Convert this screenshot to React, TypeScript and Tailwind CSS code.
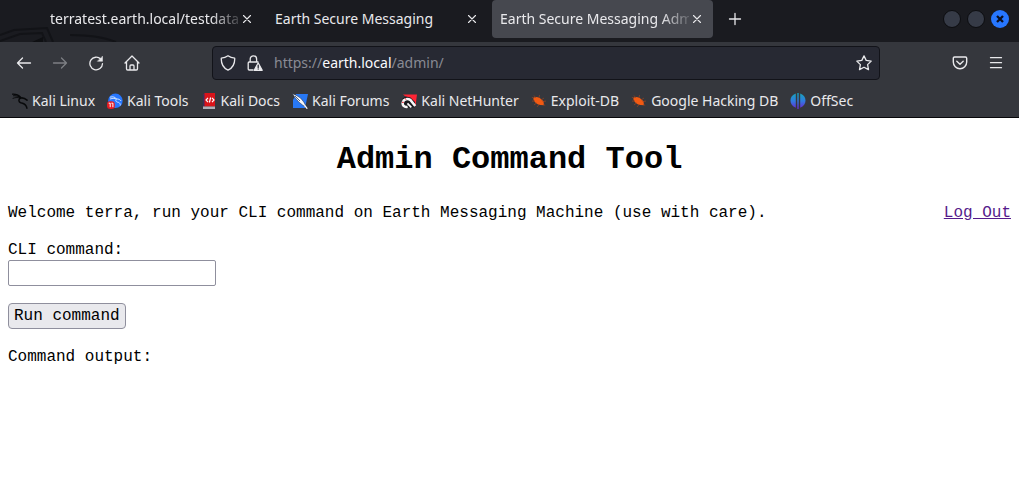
import React from "react";

type IconProps = { children: React.ReactNode; className?: string };

function Icon({ children, className = "size-4" }: IconProps) {
  return (
    <svg
      viewBox="0 0 16 16"
      className={`shrink-0 ${className}`}
      fill="none"
      stroke="currentColor"
      strokeWidth="1.3"
      strokeLinecap="round"
      strokeLinejoin="round"
      aria-hidden="true"
    >
      {children}
    </svg>
  );
}

function KaliIcon() {
  return (
    <svg viewBox="0 0 16 16" className="size-4 shrink-0" fill="none" stroke="#08090b" strokeLinecap="round" aria-hidden="true">
      <path d="M.5 1.2C3.5 1 6.5 2 8.6 4.2" strokeWidth="1.3" />
      <path d="M1.5 2.8C4.5 2.5 7 3.3 8.6 4.6" strokeWidth="1.1" />
      <path d="M1 5.3C3.6 4.2 6.4 4.4 8.4 5" strokeWidth=".9" />
      <path d="M8 5.2C10.5 4.4 12.6 5 15 7.2" strokeWidth="1.6" />
      <path d="M8.2 5.2C6.4 6.6 6.4 9 8.8 9.8 11.3 10.5 14.2 10.6 14.9 15.2" strokeWidth="1.5" />
    </svg>
  );
}

function ToolsIcon() {
  return (
    <svg viewBox="0 0 16 16" className="size-4 shrink-0" aria-hidden="true">
      <circle cx="8.4" cy="7.8" r="7.3" fill="#2777ff" />
      <path d="M2.8 4.2C6 3.2 8.5 4.2 9.5 6 11.6 5.8 13 6.6 14.2 8M3 6C6 5 8 5.5 9.5 6 8 7.5 9 9 11.5 9.4 13 10 13.5 11 13.2 12.5" fill="none" stroke="#dceaff" strokeWidth=".9" />
      <rect x="0" y="8.2" width="7.8" height="7.8" rx="3" fill="#e51b23" />
      <path d="M1.7 10.2h1.5v4M4.4 10.2h1.5v4" fill="none" stroke="#fff" strokeWidth="1" />
    </svg>
  );
}

function DocsIcon() {
  return (
    <svg viewBox="0 0 16 16" className="size-4 shrink-0" aria-hidden="true">
      <path d="M2 1.5 4 0h10v13.5H2z" fill="#d9141a" />
      <path d="M2 1.5 3.5.5v13H2z" fill="#3c2c5c" />
      <path d="M2 13.5h12V16H2z" fill="#aeb0b8" />
      <path d="m7 4.8-2 2.2 2 2.2m4-4.4 2 2.2-2 2.2M9.6 4.5 8.4 9.5" fill="none" stroke="#fff" strokeWidth="1.2" />
    </svg>
  );
}

function ForumsIcon() {
  return (
    <svg viewBox="0 0 16 16" className="size-4 shrink-0" aria-hidden="true">
      <path d="M4 1h12l-3 14H1V7z" fill="#2878f5" />
      <path d="M.3.5 4 2.2 8.5 5l3.3 4 3 5.5-4-2.3-4-3.2-3.8-4.5z" fill="#f6f7fa" stroke="#16223b" strokeWidth=".5" />
      <path d="m3 3 5 5" stroke="#253d65" strokeWidth=".8" />
      <path d="M12.5 12.5 15.3 15.7" stroke="#fff" strokeWidth="1.2" />
    </svg>
  );
}

function NetHunterIcon() {
  return (
    <svg viewBox="0 0 16 16" className="size-4 shrink-0" aria-hidden="true">
      <path d="M2 1.5h14l-1.5 11.5-4-5z" fill="#ff2434" />
      <path d="M1.5 5.5 5 3.5l4.5 1L14 9l-.5 5.5h-11z" fill="#16181d" />
      <path d="M6.6 13.8C3 14.5 1.2 12 1.8 9.5 2.5 6.2 6.5 5 9.2 6.8L14.2 13" fill="none" stroke="#f7f7f8" strokeWidth="2.6" />
      <path d="M6.4 10.4 10.3 14.4" stroke="#f7f7f8" strokeWidth="1.8" />
      <path d="M1 9.3h1.8M4.2 5.2l.8 1.5" stroke="#e61e2d" strokeWidth="1" />
    </svg>
  );
}

function BugIcon() {
  return (
    <svg viewBox="0 0 16 16" className="size-4 shrink-0" aria-hidden="true">
      <path d="M2.3 5.1C4.8 2.8 8.9 4.2 12.4 8.3L13.1 12.3 9.4 12.1C5.6 11.5 2.7 9.2 2.3 5.1Z" fill="#f25a13" />
      <path d="M5 5 3 2.5M8 5l.5-3M10 7l3-2M11.5 8.5l3.5-.4M4 7.8l-3 .4M5.5 10 3 12M8 11.5 6 14M12 11l2.2 1.5M3 5 .8 4.3" stroke="#9c4320" strokeWidth=".7" />
    </svg>
  );
}

function OffSecIcon() {
  return (
    <svg viewBox="0 0 16 16" className="size-4 shrink-0" aria-hidden="true">
      <defs>
        <linearGradient id="offsec" gradientUnits="userSpaceOnUse" x1="0" y1="0" x2="0" y2="16">
          <stop stopColor="#16a5b8" />
          <stop offset=".5" stopColor="#2f7be0" />
          <stop offset="1" stopColor="#6b24cf" />
        </linearGradient>
      </defs>
      <path d="M5.8.5v14.2C-1.3 12.3-1.3 2.8 5.8.5ZM7.3 0h1.4v16H7.3ZM10.2.5c7.1 2.3 7.1 11.8 0 14.2Z" fill="url(#offsec)" />
    </svg>
  );
}

const tabs = [
  { title: "terratest.earth.local/testdata.txt", active: false, clipped: true },
  { title: "Earth Secure Messaging", active: false, clipped: false },
  { title: "Earth Secure Messaging Admin", active: true, clipped: true },
];

const bookmarks = [
  { label: "Kali Linux", icon: <KaliIcon /> },
  { label: "Kali Tools", icon: <ToolsIcon /> },
  { label: "Kali Docs", icon: <DocsIcon /> },
  { label: "Kali Forums", icon: <ForumsIcon /> },
  { label: "Kali NetHunter", icon: <NetHunterIcon /> },
  { label: "Exploit-DB", icon: <BugIcon /> },
  { label: "Google Hacking DB", icon: <BugIcon /> },
  { label: "OffSec", icon: <OffSecIcon /> },
];

function TabBar() {
  return (
    <div className="relative flex h-[42px] items-start overflow-hidden bg-[#1a1b20] pl-[42px]">
      <svg viewBox="0 0 130 42" className="absolute top-0 left-0 h-[42px] w-[130px]" fill="none" aria-hidden="true">
        <path d="M0 35 14 30 47 28 53 42M0 41 20 34 42 33 46 42" stroke="#121317" strokeWidth="2" />
        <path d="M32 42 43 37 43 42Z" fill="#0e0f12" />
        <path d="M70 35c18 0 34 2 46 7" stroke="#121317" strokeWidth="2" />
      </svg>
      <div className="relative flex min-w-0 gap-1">
        {tabs.map((tab) => (
          <div
            key={tab.title}
            className={`flex h-[38px] w-[221px] min-w-0 items-center rounded-sm px-2 ${tab.active ? "bg-[#46484f]" : ""}`}
          >
            <button
              className={`min-w-0 flex-1 overflow-hidden text-left whitespace-nowrap ${tab.clipped ? "[mask-image:linear-gradient(to_right,black_85%,transparent_103%)]" : ""}`}
            >
              {tab.title}
            </button>
            <button aria-label="Close tab" className="flex w-4 shrink-0 justify-center">
              <Icon><path d="m4.5 4.5 7 7m0-7-7 7" strokeWidth="1.1" /></Icon>
            </button>
          </div>
        ))}
      </div>
      <button aria-label="New tab" className="ml-[14px] flex h-[38px] items-center">
        <Icon><path d="M8 2.5v11M2.5 8h11" /></Icon>
      </button>
      <div className="mr-[10px] ml-auto flex h-[38px] items-center gap-[6px]">
        <button aria-label="Minimize" className="size-[18px] rounded-full border border-[#0c0d10] bg-[#363b47]" />
        <button aria-label="Maximize" className="size-[18px] rounded-full border border-[#0c0d10] bg-[#363b47]" />
        <button aria-label="Close window" className="flex size-[18px] items-center justify-center rounded-full bg-[#2777ff] text-[#0b1020]">
          <Icon><path d="m5 5 6 6m0-6-6 6" strokeWidth="2.3" strokeLinecap="butt" /></Icon>
        </button>
      </div>
    </div>
  );
}

function NavBar() {
  return (
    <div className="flex h-[42px] items-center px-4">
      <div className="flex shrink-0 gap-5">
        <button aria-label="Back"><Icon><path d="M14.5 8h-13M6.5 3l-5 5 5 5" /></Icon></button>
        <button aria-label="Forward" className="text-[#7d7f84]"><Icon><path d="M1.5 8h13M9.5 3l5 5-5 5" /></Icon></button>
        <button aria-label="Reload">
          <Icon><path d="M12.8 4.2A6.3 6.3 0 1 0 14.5 8.6" /><path d="M14.5 1.5v4.8H9.7Z" fill="currentColor" strokeWidth=".5" /></Icon>
        </button>
        <button aria-label="Home">
          <Icon><path d="M1 8 8 1l7 7M2.5 6.7v7.1q0 1.2 1.2 1.2h8.6q1.2 0 1.2-1.2V6.7M6 15v-4q0-1 1-1h2q1 0 1 1v4" /></Icon>
        </button>
      </div>
      <div className="mr-[72px] ml-[72px] flex h-[34px] min-w-0 flex-1 items-center rounded-[4px] border border-[#121319] bg-[#272933] px-[7px]">
        <button aria-label="Tracking protection"><Icon><path d="M8 .8C10 2.3 12.3 3 14.7 3.1 15 8.8 12.6 13 8 15.2 3.4 13 1 8.8 1.3 3.1 3.7 3 6 2.3 8 .8Z" /></Icon></button>
        <button aria-label="Connection not secure" className="ml-[11px]">
          <Icon>
            <path d="M6 15H2.2Q1.2 15 1.2 14V8q0-1 1-1H11M3.2 7V4a3.2 3.2 0 0 1 6.4 0v3" />
            <path d="m11.2 8 4 7.3h-8Z" fill="currentColor" />
            <path d="M11.2 10.2v2.2M11.2 14v.1" stroke="#272933" />
          </Icon>
        </button>
        <div className="relative ml-[11px] h-5 min-w-0 flex-1 overflow-hidden">
          <input
            aria-label="Address"
            readOnly
            defaultValue="https://earth.local/admin/"
            className="w-full text-transparent caret-transparent outline-none"
          />
          <div aria-hidden="true" className="pointer-events-none absolute inset-0 whitespace-nowrap text-[#898b94]">
            https://<span className="text-[#fbfbfe]">earth.local</span>/admin/
          </div>
        </div>
        <button aria-label="Bookmark this page"><Icon><path d="m8 .9 2.2 4.5 5 .7-3.6 3.5.9 5-4.5-2.4-4.5 2.4.9-5L.8 6.1l5-.7Z" /></Icon></button>
      </div>
      <div className="-mr-px flex shrink-0 gap-5">
        <button aria-label="Save to Pocket"><Icon><path d="M2.6 2h10.8q1.3 0 1.3 1.3V7a6.7 6.7 0 0 1-13.4 0V3.3Q1.3 2 2.6 2ZM4.8 6.2 8 9.2l3.2-3" strokeWidth="1.4" /></Icon></button>
        <button aria-label="Menu"><Icon><path d="M2.5 2.7h11m-11 5h11m-11 5h11" /></Icon></button>
      </div>
    </div>
  );
}

export default function App() {
  return (
    <div className="min-h-screen bg-white">
      <header className="font-['Noto_Sans',sans-serif] text-sm text-[#e9e9ec]">
        <TabBar />
        <div className="border-b border-[#08080b] bg-[#35373d]">
          <NavBar />
          <nav aria-label="Bookmarks" className="flex h-[33px] items-center gap-3 overflow-hidden px-3">
            {bookmarks.map(({ label, icon }) => (
              <a key={label} href="#" className="flex shrink-0 items-center gap-1 whitespace-nowrap">
                {icon}
                {label}
              </a>
            ))}
          </nav>
        </div>
      </header>
      <main className="px-2 pt-6 font-['Liberation_Mono',monospace] text-base leading-[18px] text-black">
        <h1 className="text-center text-[32px] leading-9 font-bold">Admin Command Tool</h1>
        <div className="mt-[26px] flex justify-between gap-4">
          <p>Welcome terra, run your CLI command on Earth Messaging Machine (use with care).</p>
          <a href="#" className="shrink-0 text-[#551a8b] underline">Log Out</a>
        </div>
        <form className="mt-[19px] flex flex-col items-start" onSubmit={(event) => event.preventDefault()}>
          <label htmlFor="command">CLI command:</label>
          <input id="command" type="text" className="mt-px h-[26px] w-52 rounded-xs border border-[#8f8f9d] px-1" />
          <button type="submit" className="mt-[17px] h-[26px] rounded-[4px] border border-[#8f8f9d] bg-[#e9e9ed] px-[5px]">Run command</button>
        </form>
        <p className="mt-[19px]">Command output:</p>
      </main>
    </div>
  );
}
